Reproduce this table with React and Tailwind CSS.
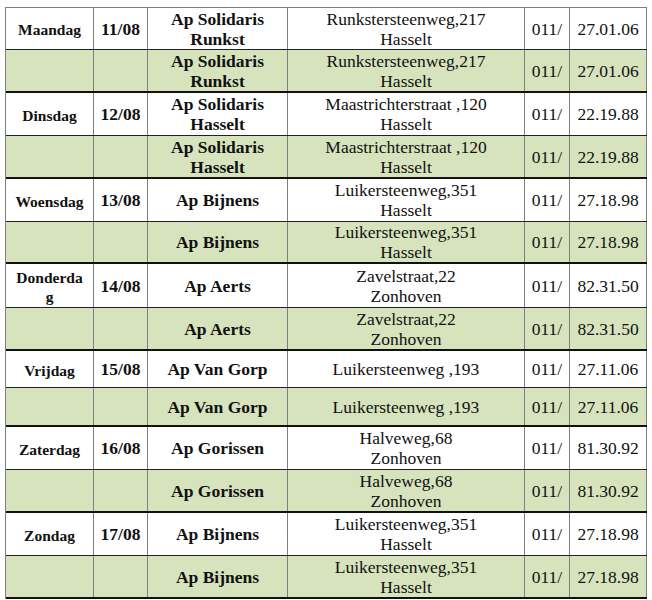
import React from "react";

const rows = [
  { day: "Maandag", date: "11/08", ap: ["Ap Solidaris", "Runkst"], addr: ["Runkstersteenweg,217", "Hasselt"], tel: "27.01.06" },
  { day: "Dinsdag", date: "12/08", ap: ["Ap Solidaris", "Hasselt"], addr: ["Maastrichterstraat ,120", "Hasselt"], tel: "22.19.88" },
  { day: "Woensdag", date: "13/08", ap: ["Ap Bijnens"], addr: ["Luikersteenweg,351", "Hasselt"], tel: "27.18.98" },
  { day: "Donderdag", date: "14/08", ap: ["Ap Aerts"], addr: ["Zavelstraat,22", "Zonhoven"], tel: "82.31.50" },
  { day: "Vrijdag", date: "15/08", ap: ["Ap Van Gorp"], addr: ["Luikersteenweg ,193"], tel: "27.11.06" },
  { day: "Zaterdag", date: "16/08", ap: ["Ap Gorissen"], addr: ["Halveweg,68", "Zonhoven"], tel: "81.30.92" },
  { day: "Zondag", date: "17/08", ap: ["Ap Bijnens"], addr: ["Luikersteenweg,351", "Hasselt"], tel: "27.18.98" },
];

const heights = [
  [42, 43],
  [43, 43],
  [43, 42],
  [44, 43],
  [37, 39],
  [43, 43],
  [43, 43],
];

function Row({ r, green, h }) {
  const cell = "flex flex-col items-center justify-center text-center border-r border-[#7f7f7f]";
  return (
    <div
      className={`flex ${green ? "bg-[#d6e3bc] border-b-2 border-[#111]" : "bg-white border-b border-[#222]"}`}
      style={{ height: h }}
    >
      <div className={`${cell} w-[88px] px-[8px] pt-[2px] text-[15.5px] font-bold leading-[19px] break-all`}>
        {green ? "" : r.day}
      </div>
      <div className={`${cell} w-[54px] text-[17.5px] font-bold leading-[20px]`}>{green ? "" : r.date}</div>
      <div className={`${cell} w-[140px] text-[17.5px] font-bold leading-[20px]`}>
        {r.ap.map((l) => (
          <span key={l}>{l}</span>
        ))}
      </div>
      <div className={`${cell} w-[237px] text-[17.5px] leading-[20px]`}>
        {r.addr.map((l) => (
          <span key={l}>{l}</span>
        ))}
      </div>
      <div className={`${cell} w-[45px] text-[17.5px] leading-[20px]`}>011/</div>
      <div className={`${cell} w-[77px] text-[17.5px] leading-[20px]`}>{r.tel}</div>
    </div>
  );
}

export default function App() {
  return (
    <div className="bg-white w-[652px] h-[600px] overflow-hidden pt-[7px] pl-[5px] text-[#111] font-['Liberation_Serif','Times_New_Roman',serif]">
      <div className="w-[642px] border-t border-l border-[#7f7f7f]">
        {rows.map((r, i) => (
          <React.Fragment key={i}>
            <Row r={r} green={false} h={heights[i][0]} />
            <Row r={r} green={true} h={heights[i][1]} />
          </React.Fragment>
        ))}
      </div>
    </div>
  );
}
